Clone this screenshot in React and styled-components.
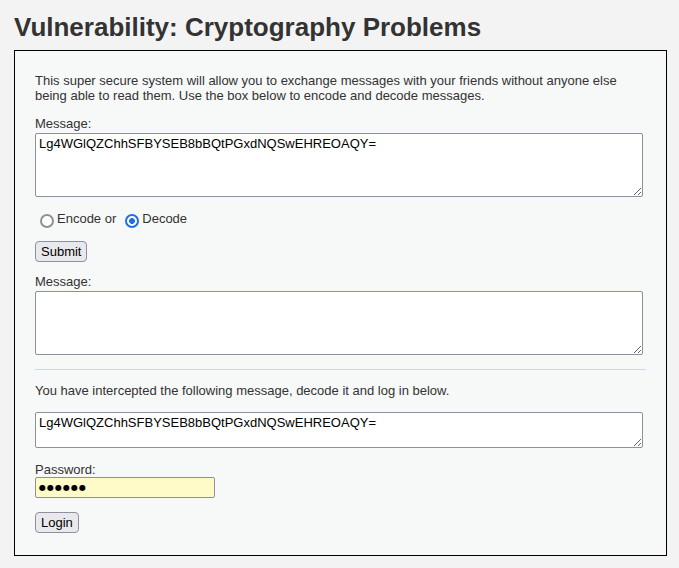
import React from 'react';
import styled, { createGlobalStyle } from 'styled-components';

const MESSAGE = 'Lg4WGlQZChhSFBYSEB8bBQtPGxdNQSwEHREOAQY=';

export default function App() {
	return (
		<>
			<GlobalStyle />
			<Page>
				<Title>Vulnerability: Cryptography Problems</Title>
				<Box>
					<Intro>
						This super secure system will allow you to exchange messages with your friends without anyone else
						being able to read them. Use the box below to encode and decode messages.
					</Intro>

					<form onSubmit={e => e.preventDefault()}>
						<Label top={13}>Message:</Label>
						<TextArea rows={4} defaultValue={MESSAGE} height={64} />

						<RadioRow>
							<RadioLabel>
								<Radio type="radio" name="direction" value="encode" />
								Encode or
							</RadioLabel>
							<RadioLabel>
								<Radio type="radio" name="direction" value="decode" defaultChecked />
								Decode
							</RadioLabel>
						</RadioRow>

						<Button type="submit" top={15}>Submit</Button>

						<Label top={12}>Message:</Label>
						<TextArea rows={4} defaultValue="" height={64} />
					</form>

					<Rule />

					<Text>You have intercepted the following message, decode it and log in below.</Text>

					<form onSubmit={e => e.preventDefault()}>
						<TextArea rows={2} defaultValue={MESSAGE} height={36} top={14} />
						<Label top={14} gap={0}>Password:</Label>
						{/* masked value shown as the dots the reference browser draws */}
						<Password type="text" readOnly value="●●●●●●" aria-label="Password" />
						<Button type="submit" top={14}>Login</Button>
					</form>
				</Box>
			</Page>
		</>
	);
}

const GlobalStyle = createGlobalStyle`
	html, body {
		margin: 0;
		padding: 0;
		background-color: #f3f3f3;
	}
	body {
		font-family: "Liberation Sans", Arial, sans-serif;
		font-size: 13px;
		line-height: 15px;
		color: #333;
	}
`

const Page = styled.div`
	display: flex;
	flex-direction: column;
	padding: 12px 12px 12px 14px;
	height: 568px;
	box-sizing: border-box;
`

const Title = styled.h1`
	margin: 0 0 8px;
	font-size: 26px;
	line-height: 30px;
	font-weight: bold;
	color: #333;
`

const Box = styled.div`
	flex: 1;
	border: 1px solid #000;
	background-color: #f7f8f8;
	padding: 22px 20px 0 20px;
`

const Intro = styled.p`
	margin: 0;
`

const Text = styled.p`
	margin: 13px 0 0;
`

const Label = styled.div`
	margin-top: ${p => p.top}px;
	margin-bottom: ${p => (p.gap === undefined ? 2 : p.gap)}px;
`

const TextArea = styled.textarea`
	display: block;
	box-sizing: border-box;
	width: 608px;
	height: ${p => p.height}px;
	margin: ${p => p.top || 0}px 0 0;
	padding: 2px 3px;
	border: 1px solid #8f8f9d;
	border-radius: 2px;
	background: #fff;
	font-family: "Liberation Sans", Arial, sans-serif;
	font-size: 13px;
	line-height: 15px;
	color: #000;
	outline: none;
`

const RadioRow = styled.div`
	display: flex;
	margin-top: 14px;
	height: 15px;
`

const RadioLabel = styled.label`
	display: flex;
	align-items: flex-start;
	margin-right: 4px;
	color: #333;
`

const Radio = styled.input`
	appearance: none;
	box-sizing: border-box;
	width: 14px;
	height: 14px;
	margin: 3px 3px 0 5px;
	border: 2px solid #8f8f9d;
	border-radius: 50%;
	background: #fff;

	&:checked {
		border-color: #1d6fe5;
		background: radial-gradient(circle, #1d6fe5 0 2.6px, #fff 3.2px);
	}
`

const Button = styled.button`
	display: block;
	box-sizing: border-box;
	height: 21px;
	margin-top: ${p => p.top}px;
	padding: 0 5px;
	border: 1px solid #8f8f9d;
	border-radius: 4px;
	background-color: #e9e9ed;
	font-family: "Liberation Sans", Arial, sans-serif;
	font-size: 13px;
	line-height: 15px;
	color: #000;
`

const Rule = styled.hr`
	margin: 14px 0 0;
	border: 0;
	border-top: 1px solid #c9d7f3;
	width: 611px;
`

const Password = styled.input`
	display: block;
	box-sizing: border-box;
	width: 180px;
	height: 21px;
	margin: 0;
	padding: 1px 3px;
	border: 1px solid #8f8f9d;
	border-radius: 2px;
	background-color: #fefbc8;
	font-family: "DejaVu Sans", "Liberation Sans", sans-serif;
	font-size: 8px;
	letter-spacing: 1px;
	color: #000;
	outline: none;
`
